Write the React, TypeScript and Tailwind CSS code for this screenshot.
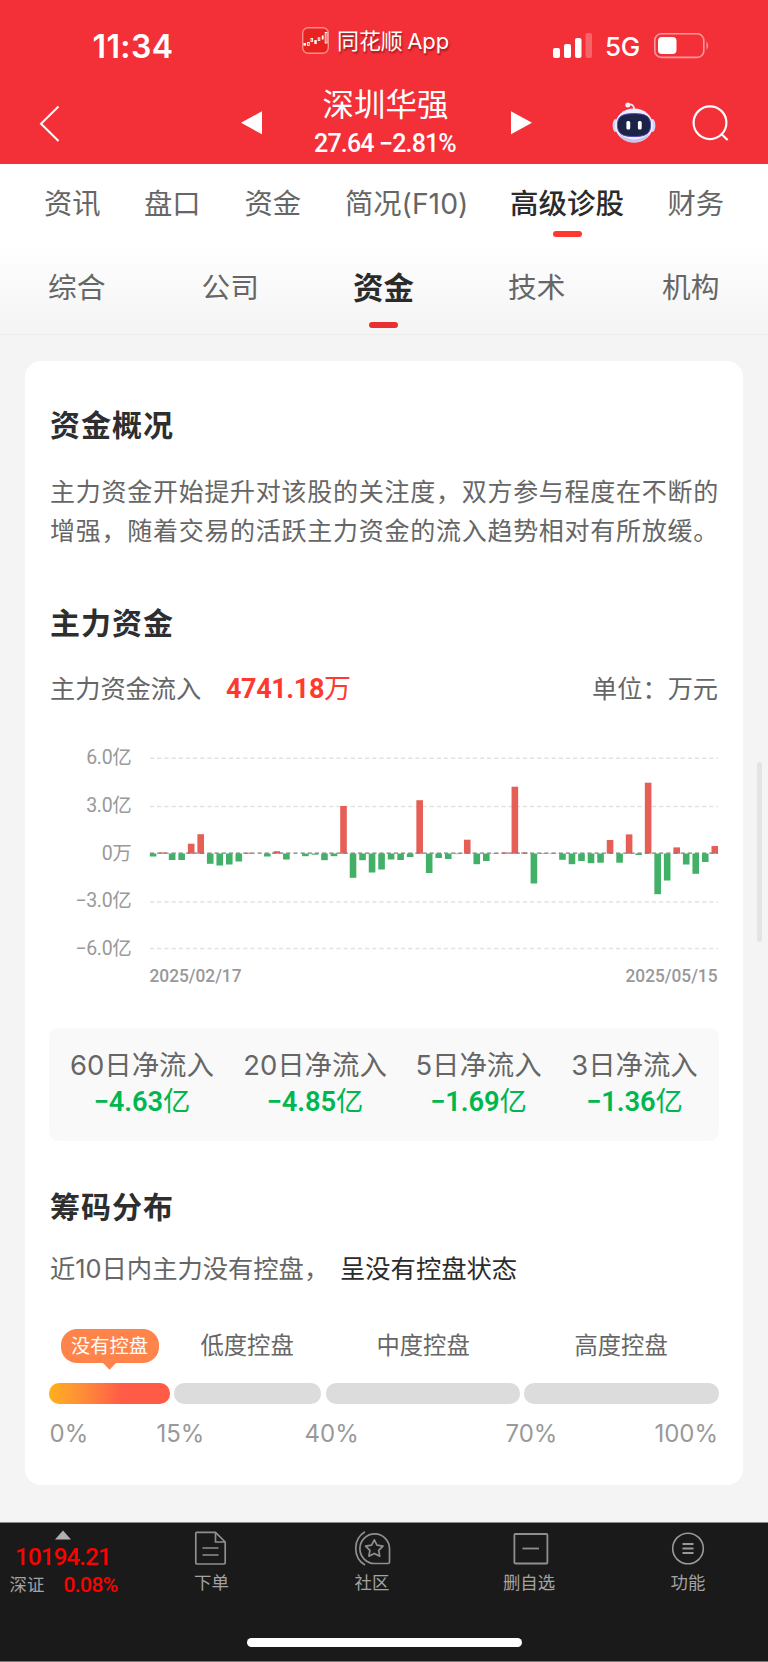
import React from "react";

const FLOWS = [
  -3, 1.3, -6.5, -6.5, 10, 19.5, -10.3, -12, -11, -8, 1, 0, -3, 2.5, -6, 0, -2.7, -1.2, -6.7, -2.7,
  47.7, -24.3, -6.7, -19, -16, -6, -6.5, -3.5, 53.5, -19.5, -4.5, -5.5, -0.6, 14, -10.7, -7.5, -0.5, 1.3, 67, 1.2,
  -30, -0.5, -0.5, -6.3, -10.7, -7.5, -9.7, -9.2, 13.7, -9.2, 19.3, -1.5, 71, -40.7, -27, 6.3, -11, -20.3, -8.5, 7.7,
];

const CJK = "font-['Inter','Noto_Sans_CJK_SC',sans-serif]";
const NUM = "font-['Roboto','Noto_Sans_CJK_SC',sans-serif]";

function StatusBar() {
  return (
    <div className="flex h-[84px] items-start pl-[92.5px]">
      <div className="mt-[27px] h-10 w-[209.5px] text-[32px] leading-10 font-semibold tracking-[0.4px]">11:34</div>
      <svg className="mt-[27px]" width="27" height="27" viewBox="0 0 27 27">
        <rect x="0.7" y="0.7" width="25.6" height="25.6" rx="5.5" fill="#e8221f" stroke="#f78d8d" strokeWidth="1.4" />
        <g fill="#fff">
          <rect x="1.5" y="16" width="2.6" height="2.6" />
          <rect x="12.3" y="13" width="2.4" height="4" />
          <rect x="19.8" y="8.5" width="1.8" height="4" />
        </g>
        <g fill="none" stroke="#fff" strokeWidth="0.9">
          <rect x="5.6" y="15.5" width="1.6" height="3" />
          <rect x="9" y="11.5" width="1.6" height="3" />
          <rect x="16.2" y="10.8" width="1.6" height="2.6" />
          <rect x="23.2" y="5.5" width="1.8" height="10.5" />
        </g>
      </svg>
      <div className="mt-[25px] ml-2 w-[216px] text-[22px] leading-8 font-normal tracking-[-0.1px] whitespace-nowrap [text-shadow:1px_2px_2px_rgba(90,0,0,0.55)] [word-spacing:-1.5px]">
        同花顺 App
      </div>
      <svg className="mt-[33px]" width="52" height="26" viewBox="0 0 52 26">
        <g fill="#fff">
          <rect x="0" y="15" width="7" height="10" rx="2" />
          <rect x="11" y="11" width="7" height="14" rx="2" />
          <rect x="22" y="5" width="6.5" height="20" rx="2" />
          <rect x="32.5" y="0" width="6.5" height="25" rx="2" opacity="0.25" />
        </g>
      </svg>
      <span className="mt-[29px] w-[49px] text-[26px] leading-9 font-medium tracking-[-0.3px]">5G</span>
      <svg className="mt-[33px]" width="57" height="26" viewBox="0 0 57 26">
        <rect x="4" y="4" width="18.5" height="17" rx="4" fill="#fff" />
        <path d="M52.5 8 Q55.7 12.5 52.5 17Z" fill="#fff" opacity="0.5" />
        <rect x="0.8" y="0.8" width="49" height="23.6" rx="6.5" fill="none" stroke="#fff" strokeOpacity="0.5" strokeWidth="1.6" />
      </svg>
    </div>
  );
}

function Robot() {
  return (
    <svg width="44" height="42" viewBox="0 0 44 42">
      <path d="M16 2.5 Q22.5 1.5 22 8" fill="none" stroke="#e6e6f6" strokeWidth="1.8" />
      <circle cx="15.8" cy="3" r="2.5" fill="#efeffc" />
      <ellipse cx="3.4" cy="23.5" rx="2.8" ry="6.5" fill="#cfd3f6" />
      <ellipse cx="40.6" cy="23.5" rx="2.8" ry="6.5" fill="#cfd3f6" />
      <ellipse cx="22" cy="23.5" rx="19" ry="17" fill="#eceeff" />
      <path d="M6 31 Q22 44 38 31 Q33 40.5 22 40.5 Q11 40.5 6 31Z" fill="#c3c7ef" />
      <path d="M22 11.6 C34 11.6 38.6 14.5 38.6 23 C38.6 31.5 34 34.6 22 34.6 C10 34.6 5.4 31.5 5.4 23 C5.4 14.5 10 11.6 22 11.6Z" fill="#1b2347" stroke="#5a4bb8" strokeWidth="1" />
      <rect x="14.4" y="19" width="3.8" height="8.5" rx="1.5" fill="#fff" />
      <rect x="25.9" y="19" width="3.8" height="8.5" rx="1.5" fill="#fff" />
    </svg>
  );
}

function Header() {
  return (
    <header className="h-[163.5px] bg-[#f33038] text-white">
      <StatusBar />
      <div className="flex h-[79px] items-start">
        <svg className="mt-[21px] ml-[39px]" width="22" height="38" viewBox="0 0 22 38">
          <path d="M19.5 1.5 L2 18.7 L19.5 36" fill="none" stroke="#fff" strokeWidth="2" />
        </svg>
        <svg className="mt-[27px] ml-[180px]" width="21" height="24" viewBox="0 0 21 24">
          <path d="M0 11.7 L21 0.3 V23.3Z" fill="#fff" />
        </svg>
        <div className="w-[249px] text-center">
          <h1 className="mt-[2px] -ml-[2px] h-[38px] text-[31.5px] leading-[38px] font-normal">深圳华强</h1>
          <div className={`mt-[4px] -ml-[3px] h-8 text-[25px] leading-8 font-medium tracking-[-0.85px] ${NUM}`}>27.64 −2.81%</div>
        </div>
        <svg className="mt-[27px]" width="21" height="24" viewBox="0 0 21 24">
          <path d="M21 11.7 L0 0.3 V23.3Z" fill="#fff" />
        </svg>
        <div className="mt-[17.5px] ml-[79.5px]">
          <Robot />
        </div>
        <svg className="mt-[20px] ml-9" width="38" height="38" viewBox="0 0 38 38">
          <circle cx="18" cy="18.7" r="16.4" fill="none" stroke="#fff" strokeWidth="2.2" />
          <path d="M28.8 29.5 L35.6 36" stroke="#fff" strokeWidth="2.2" />
        </svg>
      </div>
    </header>
  );
}

function Tabs() {
  return (
    <nav className="text-[#666]">
      <div className="flex h-[77px] items-start pt-[20px] pl-[44px] text-[28.3px] leading-10 whitespace-nowrap">
        <span className="w-[100px]">资讯</span>
        <span className="w-[100.5px]">盘口</span>
        <span className="w-[100.5px]">资金</span>
        <span className="w-[165px]">简况(F10)</span>
        <span className="flex w-[114px] flex-col items-center text-[28.5px] font-medium text-[#2b2b2b]">
          高级诊股
          <i className="mt-[7.5px] h-[6px] w-[29px] rounded-full bg-[#ff3830]" />
        </span>
        <span className="ml-[43.5px]">财务</span>
      </div>
      <div className="flex h-[94px] items-start border-b border-[#ececec] bg-linear-to-b from-white to-[#f4f4f4] pt-[27px] pl-[48px] text-[28.7px] leading-10 whitespace-nowrap">
        <span className="w-[153.5px]">综合</span>
        <span className="w-[151.5px]">公司</span>
        <span className="flex w-[61px] flex-col items-center text-[30.5px] font-bold text-[#2b2b2b]">
          资金
          <i className="mt-[14.5px] h-[6px] w-[29px] rounded-full bg-[#ea2f30]" />
        </span>
        <span className="ml-[94px] w-[154px]">技术</span>
        <span>机构</span>
      </div>
    </nav>
  );
}

function Heading({ children }: { children: React.ReactNode }) {
  return <h2 className="h-10 text-[30px] leading-10 font-bold tracking-[1px] text-[#2e2e2e]">{children}</h2>;
}

function FlowChart() {
  const grid = [13.3, 61.5, 157, 203.5];
  const labels: [string, number][] = [["6.0亿", 19], ["3.0亿", 67], ["0万", 114.5], ["−3.0亿", 162], ["−6.0亿", 209.5]];
  return (
    <svg className="-ml-[50px] block" width="768" height="250" viewBox="0 0 768 250">
      {grid.map((y) => (
        <path key={y} d={`M150 ${y} H718`} stroke="#e2e2e2" strokeWidth="1.6" strokeDasharray="4.2 2.97" />
      ))}
      {FLOWS.map((v, i) => (
        <rect key={i} x={149.8 + i * 9.52} y={v > 0 ? 108.7 - v : 108.5} width="6.6" height={Math.abs(v)} fill={v > 0 ? "#e65e56" : "#43b068"} />
      ))}
      <path d="M150 108.2 H718" stroke="#7d7d7d" strokeWidth="1.2" strokeDasharray="4.2 2.97" />
      <g fill="#999" fontFamily="Roboto, 'Noto Sans CJK SC', sans-serif" fontSize="19.5">
        {labels.map(([text, y]) => (
          <text key={text} x="131.5" y={y} textAnchor="end" letterSpacing="-0.3">{text}</text>
        ))}
        <text x="149.5" y="237" fontSize="19" fontWeight="500" textLength="92" lengthAdjust="spacingAndGlyphs">2025/02/17</text>
        <text x="625.5" y="237" fontSize="19" fontWeight="500" textLength="92" lengthAdjust="spacingAndGlyphs">2025/05/15</text>
      </g>
    </svg>
  );
}

function Stat({ label, value, className }: { label: string; value: string; className: string }) {
  return (
    <div className={`flex flex-col items-center whitespace-nowrap ${className}`}>
      <span className="h-9 text-[27.4px] leading-9 text-[#666]">{label}</span>
      <span className={`mt-[1px] h-9 text-[27.3px] leading-9 text-[#00b74f] ${NUM}`}>
        <b className="tracking-[-0.1px] font-semibold">{value}</b>亿
      </span>
    </div>
  );
}

function ControlScale() {
  return (
    <div>
      <div className="flex h-[54px] items-start text-[23.3px] leading-[34px] whitespace-nowrap text-[#666]">
        <div className="ml-[10.5px] flex w-[98px] flex-col items-center">
          <span className="h-[34px] w-[98px] rounded-[16px] bg-[#ff844b] text-center text-[19.3px] leading-[34px] text-white">没有控盘</span>
          <svg width="13" height="7" viewBox="0 0 13 7">
            <path d="M0 0 H13 L6.5 6.7Z" fill="#ff844b" />
          </svg>
        </div>
        <span className="ml-[42px] w-[176px]">低度控盘</span>
        <span className="w-[198px]">中度控盘</span>
        <span>高度控盘</span>
      </div>
      <div className="-ml-[1px] flex h-[21px] w-[670px] gap-1">
        <i className="w-[121px] rounded-[10px] bg-linear-to-r from-[#ffb01b] to-[#ff5b46] to-60%" />
        <i className="w-[147px] rounded-[10px] bg-[#dcdcdc]" />
        <i className="ml-[1px] w-[194px] rounded-[10px] bg-[#dcdcdc]" />
        <i className="flex-1 rounded-[10px] bg-[#dcdcdc]" />
      </div>
      <div className="mt-[14px] flex h-8 text-[24px] leading-8 text-[#999]">
        <span className="w-[107px] -ml-[0.5px]">0%</span>
        <span className="w-[148px]">15%</span>
        <span className="w-[201px]">40%</span>
        <span className="w-[100px]">70%</span>
        <span className="flex-1 text-right">100%</span>
      </div>
    </div>
  );
}

function Card() {
  return (
    <main className="ml-[25px] h-[1124px] w-[718px] rounded-[16px] bg-white pt-[44px] pl-[25px]">
      <div className="w-[668px]">
        <Heading>资金概况</Heading>
        <p className="mt-[28px] text-[25px] leading-[39.3px] tracking-[0.73px] whitespace-nowrap text-[#666]">
          主力资金开始提升对该股的关注度，双方参与程度在不断的
          <br />
          增强，随着交易的活跃主力资金的流入趋势相对有所放缓。
        </p>
        <div className="mt-[51px]">
          <Heading>主力资金</Heading>
        </div>
        <div className="mt-[28px] flex h-9 text-[25.2px] leading-9 whitespace-nowrap text-[#666]">
          <span className="w-[176px]">主力资金流入</span>
          <span className={`text-[27px] text-[#ff392f] ${NUM}`}>
            <b className="inline-block scale-y-[1.04] font-bold tracking-[-0.4px]">4741.18</b>万
          </span>
          <span className="ml-auto">单位：万元</span>
        </div>
        <div className="mt-[38px]">
          <FlowChart />
        </div>
        <div className="mt-[33px] -ml-[1px] flex h-[113px] w-[670px] rounded-[9px] bg-[#f9f9f9] pt-[19px] pl-5">
          <Stat className="w-[146px]" label="60日净流入" value="−4.63" />
          <Stat className="ml-[27px] w-[146px]" label="20日净流入" value="−4.85" />
          <Stat className="ml-[26.5px] w-[128px]" label="5日净流入" value="−1.69" />
          <Stat className="ml-[28px] w-[128px]" label="3日净流入" value="−1.36" />
        </div>
        <div className="mt-[46px]">
          <Heading>筹码分布</Heading>
        </div>
        <div className="mt-[23px] flex h-[38px] text-[25.3px] leading-[38px] whitespace-nowrap text-[#666]">
          <span className="w-[290px]">近10日内主力没有控盘，</span>
          <span className="text-[#2b2b2b]">呈没有控盘状态</span>
        </div>
        <div className="mt-[41px]">
          <ControlScale />
        </div>
      </div>
    </main>
  );
}

function BottomBar() {
  return (
    <footer className="flex h-[140px] flex-col border-t border-b border-t-[#8a8a8a] border-b-[#777] bg-[#1a1a1a] text-[17.4px] leading-6 text-[#a3a3a3]">
      <div className="flex h-[115px] items-start whitespace-nowrap">
        <div className="w-[126px]">
          <svg className="mt-[7.5px] ml-[55px] block" width="16" height="10" viewBox="0 0 16 10">
            <path d="M8 0.5 L16 9.5 H0Z" fill="#b0b0b0" />
          </svg>
          <div className={`h-7 w-[126px] pt-[2.5px] text-center text-[24px] leading-7 font-medium tracking-[-0.8px] text-[#f00] ${NUM}`}>10194.21</div>
          <div className="mt-[5px] flex items-center pl-[9.5px]">
            <span className="w-[54px]">深证</span>
            <span className={`text-[21px] font-medium tracking-[-0.6px] text-[#f00] ${NUM}`}>0.08%</span>
          </div>
        </div>
        <div className="ml-[67.5px] flex w-[36px] flex-col items-center pt-[8px]">
          <svg width="34" height="35" viewBox="0 0 34 35" className="-ml-[4px]" fill="none" stroke="#8f8f8f" strokeWidth="1.7">
            <path d="M3.8 1.3 H22.5 L32.2 11 V31.8 Q32.2 33 31 33 H4 Q2.8 33 2.8 31.8 V2.3 Q2.8 1.3 3.8 1.3Z M22.5 1.3 V11 H32.2 M9.5 17 H25.5 M9.5 24 H25.5" />
          </svg>
          <span className="mt-[5px]">下单</span>
        </div>
        <div className="ml-[123.5px] flex w-[38px] flex-col items-center pt-[8px]">
          <svg width="38" height="35" viewBox="0 0 38 35" fill="none" stroke="#8f8f8f" strokeWidth="1.7" strokeLinejoin="round">
            <path d="M12 0.8 A19.5 19.5 0 0 0 12 34" />
            <path d="M36.5 17.8 V31 Q36.5 32.5 35 32.5 H21.5 A14.8 14.8 0 1 1 36.5 17.8Z" />
            <path d="M21.3 8.8 L24 14.2 L30 15.1 L25.7 19.3 L26.7 25.2 L21.3 22.4 L15.9 25.2 L16.9 19.3 L12.6 15.1 L18.6 14.2Z" />
          </svg>
          <span className="mt-[5px]">社区</span>
        </div>
        <div className="ml-[110px] flex w-[56px] flex-col items-center pt-[8px]">
          <svg className="ml-[4px]" width="36" height="35" viewBox="0 0 36 35" fill="none" stroke="#8f8f8f" strokeWidth="1.8">
            <rect x="1.4" y="3" width="33" height="29.5" rx="1" />
            <path d="M9.5 17.5 H26" />
          </svg>
          <span className="mt-[5px]">删自选</span>
        </div>
        <div className="ml-[113px] flex w-[36px] flex-col items-center pt-[8px]">
          <svg width="34" height="35" viewBox="0 0 34 35" fill="none" stroke="#999" strokeWidth="1.6">
            <circle cx="17" cy="17.5" r="15.3" />
            <path d="M11.5 13 H22.5 M11.5 17.5 H22.5 M11.5 22 H22.5" strokeWidth="2" />
          </svg>
          <span className="mt-[5px]">功能</span>
        </div>
      </div>
      <div className="ml-[247px] h-[9px] w-[275px] rounded-full bg-white" />
    </footer>
  );
}

export default function App() {
  return (
    <div lang="zh-CN" className={`relative flex h-[1662px] w-[768px] flex-col overflow-hidden bg-[#f4f4f4] ${CJK}`}>
      <Header />
      <div className="bg-white">
        <Tabs />
      </div>
      <div className="mt-[26.5px] mb-[36.5px]">
        <Card />
      </div>
      <BottomBar />
      <div className="absolute top-[762px] left-[757px] h-[180px] w-[5px] rounded-full bg-[#e4e4e4]" />
    </div>
  );
}
